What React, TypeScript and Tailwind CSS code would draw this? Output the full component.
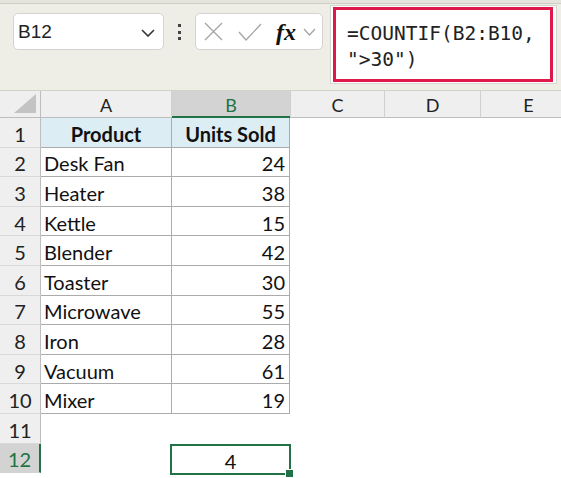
import React from "react";

const rows: [string, string][] = [
  ["Desk Fan", "24"],
  ["Heater", "38"],
  ["Kettle", "15"],
  ["Blender", "42"],
  ["Toaster", "30"],
  ["Microwave", "55"],
  ["Iron", "28"],
  ["Vacuum", "61"],
  ["Mixer", "19"],
];

const cellFont = { fontFamily: "Lato, 'Open Sans', sans-serif" };

function RowHead({ n, selected }: { n: number; selected?: boolean }) {
  return (
    <div
      className={
        "w-[41px] shrink-0 h-full flex items-center justify-center pt-[3px] text-[20px] box-border border-b " +
        (selected
          ? "bg-[#d3d3d3] text-[#217346] border-r-2 border-r-[#217346] border-b-[#d3d3d3]"
          : "bg-[#efefef] text-[#222] border-r border-r-[#bdbdbd] border-b-[#d9d9d9]")
      }
    >
      {n}
    </div>
  );
}

export default function App() {
  return (
    <div className="w-[561px] h-[478px] overflow-hidden bg-white relative" style={cellFont}>
      {/* formula bar area */}
      <div className="h-[91px] bg-[#eeeee6] border-b border-[#d2d2cc] flex flex-col">
        <div className="h-[4px] bg-[#e5e5dd] border-b border-[#cfcfc6]" />
        <div className="flex items-start">
          <div
            className="ml-[13px] mt-[9px] w-[151px] h-[37px] bg-white border border-[#d3d3d3] rounded-[5px] flex items-center justify-between pl-[4px] pr-[8px] pt-[2px] text-[19px] text-[#222]"
            style={{ fontFamily: "'Liberation Sans', Arial, sans-serif" }}
          >
            <span>B12</span>
            <svg width="14" height="8" viewBox="0 0 14 8">
              <path d="M1 1 L7 7 L13 1" fill="none" stroke="#333" strokeWidth="1.6" />
            </svg>
          </div>
          <div className="w-[31px] mt-[20px] flex flex-col items-center gap-[3.5px]">
            <div className="w-[3px] h-[3px] bg-[#444]" />
            <div className="w-[3px] h-[3px] bg-[#444]" />
            <div className="w-[3px] h-[3px] bg-[#444]" />
          </div>
          <div className="mt-[9px] w-[128px] h-[37px] bg-white border border-[#d3d3d3] rounded-[5px] flex items-center pl-[8px]">
            <svg width="19" height="19" viewBox="0 0 19 19">
              <path d="M1 1 L18 18 M18 1 L1 18" stroke="#a5a5a5" strokeWidth="1.3" fill="none" />
            </svg>
            <svg width="24" height="18" viewBox="0 0 24 18" className="ml-[15px]">
              <path d="M1 9 L8 17 L23 1" stroke="#a5a5a5" strokeWidth="1.3" fill="none" />
            </svg>
            <span
              className="ml-[14px] text-[24px] italic font-bold text-[#111] leading-none"
              style={{ fontFamily: "'Liberation Serif', 'Times New Roman', serif" }}
            >
              fx
            </span>
            <svg width="13" height="8" viewBox="0 0 13 8" className="ml-[7px]">
              <path d="M1 1 L6.5 7 L12 1" stroke="#a5a5a5" strokeWidth="1.3" fill="none" />
            </svg>
          </div>
          <div className="ml-[7px] mt-[1px] w-[227px] h-[79px] bg-white border border-[#d6d6d0] pl-[2px] pt-[1px]">
            <div
              className="w-[220px] h-[75px] border-[3px] border-[#e0194b] pl-[11px] pt-[11px] text-[19.5px] leading-[26px] text-[#222]"
              style={{ fontFamily: "'DejaVu Sans Mono', 'Liberation Mono', monospace" }}
            >
              <div>=COUNTIF(B2:B10,</div>
              <div>"&gt;30")</div>
            </div>
          </div>
        </div>
      </div>

      {/* column headers */}
      <div className="flex h-[27px] bg-[#efefef] text-[18px] text-[#222]">
        <div className="w-[41px] shrink-0 h-full border-r border-[#bdbdbd] border-b border-b-[#bdbdbd] relative">
          <svg width="22" height="19" viewBox="0 0 22 19" className="absolute right-[4px] bottom-[4px]">
            <path d="M22 0 L22 19 L0 19 Z" fill="#c3c3c3" />
          </svg>
        </div>
        <div className="w-[131px] shrink-0 h-full flex items-center justify-center pt-[3px] border-r border-[#d0d0d0] border-b border-b-[#bdbdbd]">
          A
        </div>
        <div className="w-[118px] shrink-0 h-full flex items-center justify-center pt-[3px] bg-[#d3d3d3] text-[#217346] border-b-2 border-[#217346]">
          B
        </div>
        <div className="w-[95px] shrink-0 h-full flex items-center justify-center pt-[3px] border-r border-l border-[#d0d0d0] border-b border-b-[#bdbdbd]">
          C
        </div>
        <div className="w-[96px] shrink-0 h-full flex items-center justify-center pt-[3px] border-r border-[#d0d0d0] border-b border-b-[#bdbdbd]">
          D
        </div>
        <div className="w-[96px] shrink-0 h-full flex items-center justify-center pt-[3px] border-r border-[#d0d0d0] border-b border-b-[#bdbdbd]">
          E
        </div>
      </div>

      {/* row 1 */}
      <div className="flex h-[29.6px] text-[20px] text-[#111]">
        <RowHead n={1} />
        <div className="w-[131px] shrink-0 h-full bg-[#ddedf4] flex items-center justify-center pt-[3px] font-bold border-r border-b border-[#ababab]">
          Product
        </div>
        <div className="w-[118px] shrink-0 h-full bg-[#ddedf4] flex items-center justify-center pt-[3px] font-bold border-r border-b border-[#ababab]">
          Units Sold
        </div>
      </div>

      {rows.map(([p, u], i) => (
        <div key={p} className="flex h-[29.6px] text-[20px] text-[#111]">
          <RowHead n={i + 2} />
          <div className="w-[131px] shrink-0 h-full flex items-center pt-[3px] pl-[3px] border-r border-b border-[#ababab]">
            {p}
          </div>
          <div className="w-[118px] shrink-0 h-full flex items-center justify-end pt-[3px] pr-[4px] border-r border-b border-[#ababab]">
            {u}
          </div>
        </div>
      ))}

      {/* row 11 */}
      <div className="flex h-[29.6px] text-[20px] text-[#111]">
        <RowHead n={11} />
      </div>

      {/* row 12 */}
      <div className="flex h-[29.6px] text-[20px] text-[#111]">
        <RowHead n={12} selected />
        <div className="w-[129px] shrink-0 h-full" />
        <div className="w-[121px] shrink-0 h-[31px] border-2 border-[#217346] flex items-center justify-center pt-[3px] relative">
          4
          <div className="absolute right-[-5px] bottom-[-5px] w-[9px] h-[9px] bg-[#217346] border border-white" />
        </div>
      </div>
    </div>
  );
}
